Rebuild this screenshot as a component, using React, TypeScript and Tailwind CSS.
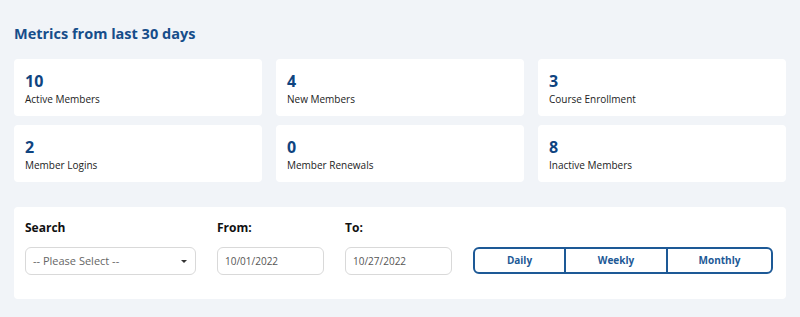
const metrics = [
  { value: "10", label: "Active Members" },
  { value: "4", label: "New Members" },
  { value: "3", label: "Course Enrollment" },
  { value: "2", label: "Member Logins" },
  { value: "0", label: "Member Renewals" },
  { value: "8", label: "Inactive Members" },
];

function MetricCard({ value, label }: { value: string; label: string }) {
  return (
    <div className="h-[57px] rounded bg-white px-[11px] pt-[12px]">
      <div className="text-[16px] font-bold leading-[20px] text-[#0f4480]">
        {value}
      </div>
      <div className="mt-[1px] text-[10px] leading-[14px] text-[#222]">
        {label}
      </div>
    </div>
  );
}

export default function App() {
  return (
    <div className="min-h-[317px] w-[800px] bg-[#f1f4f8] px-[14px] pt-[24px] font-['Open_Sans',sans-serif]">
      <h2 className="text-[14.5px] font-bold leading-[20px] text-[#164d8a]">
        Metrics from last 30 days
      </h2>

      <div className="mt-[15px] grid grid-cols-3 gap-x-[14px] gap-y-[9px]">
        {metrics.map((m) => (
          <MetricCard key={m.label} value={m.value} label={m.label} />
        ))}
      </div>

      <div className="mt-[25px] flex h-[92px] items-start gap-[21px] rounded bg-white px-[11px] pt-[13px]">
        <div className="flex w-[171px] flex-col">
          <label className="text-[12px] font-bold leading-[16px] text-[#111]">
            Search
          </label>
          <div className="mt-[11px] flex h-[28px] items-center justify-between rounded-md border border-[#d9d9d9] px-[7px] text-[11px] text-[#666]">
            <span>-- Please Select --</span>
            <svg width="8" height="5" viewBox="0 0 8 5">
              <path d="M1 1h6L4 4z" fill="#333" />
            </svg>
          </div>
        </div>

        <div className="flex w-[107px] flex-col">
          <label className="text-[12px] font-bold leading-[16px] text-[#111]">
            From:
          </label>
          <div className="mt-[11px] flex h-[28px] items-center rounded-md border border-[#d9d9d9] px-[7px] text-[10px] text-[#555]">
            10/01/2022
          </div>
        </div>

        <div className="flex w-[107px] flex-col">
          <label className="text-[12px] font-bold leading-[16px] text-[#111]">
            To:
          </label>
          <div className="mt-[11px] flex h-[28px] items-center rounded-md border border-[#d9d9d9] px-[7px] text-[10px] text-[#555]">
            10/27/2022
          </div>
        </div>

        <div className="mt-[27px] flex h-[27px] w-[300px] overflow-hidden rounded-md border-2 border-[#1d5996] text-[10px] font-bold text-[#1d5996]">
          <div className="flex w-[91px] items-center justify-center border-r-2 border-[#1d5996]">
            Daily
          </div>
          <div className="flex w-[102px] items-center justify-center border-r-2 border-[#1d5996]">
            Weekly
          </div>
          <div className="flex flex-1 items-center justify-center">Monthly</div>
        </div>
      </div>
    </div>
  );
}
